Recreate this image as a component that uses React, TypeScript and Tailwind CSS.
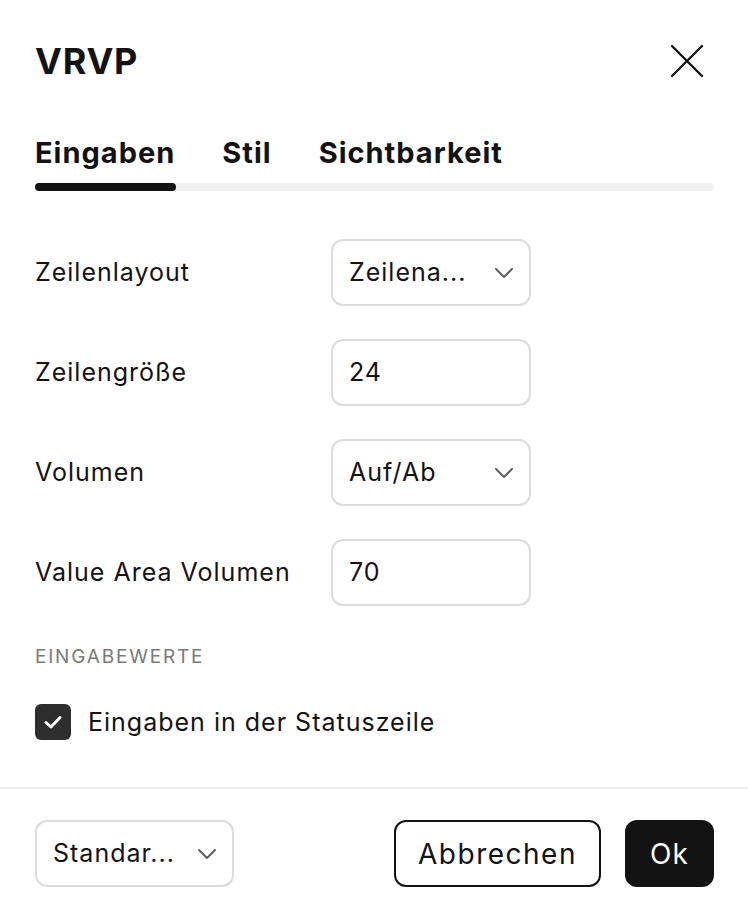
import React from "react";

function Chevron() {
  return (
    <svg width="20" height="12" viewBox="0 0 20 12" fill="none" className="shrink-0">
      <path d="M2 2 L10 10 L18 2" stroke="#5e5e5e" strokeWidth="2" strokeLinecap="round" strokeLinejoin="round" />
    </svg>
  );
}

function SelectBox({ value, w = "w-[200px]" }: { value: string; w?: string }) {
  return (
    <div className={`${w} h-[67px] rounded-[12px] border-2 border-[#dcdcdc] flex items-center justify-between pl-[16px] pr-[15px] bg-white`}>
      <span className="text-[25px] tracking-[1px] text-[#131313]">{value}</span>
      <Chevron />
    </div>
  );
}

function InputBox({ value }: { value: string }) {
  return (
    <div className="w-[200px] h-[67px] rounded-[12px] border-2 border-[#dcdcdc] flex items-center pl-[16px] bg-white">
      <span className="text-[25px] tracking-[1px] text-[#131313]">{value}</span>
    </div>
  );
}

function Row({ label, children }: { label: string; children: React.ReactNode }) {
  return (
    <div className="flex items-center h-[67px]">
      <div className="w-[296px] text-[25px] tracking-[1px] text-[#131313]">{label}</div>
      {children}
    </div>
  );
}

export default function App() {
  return (
    <div className="w-[748px] h-[918px] bg-white flex flex-col" style={{ fontFamily: "Inter, 'Noto Sans', sans-serif" }}>
      <div className="px-[35px] pr-[34px]">
        <div className="flex items-center justify-between h-[62px] mt-[30px]">
          <h1 className="text-[36px] font-bold text-[#131313] tracking-[0.8px]">VRVP</h1>
          <svg width="34" height="34" viewBox="0 0 34 34" className="mr-[10px]">
            <path d="M2 2 L32 32 M32 2 L2 32" stroke="#131313" strokeWidth="2.4" strokeLinecap="round" />
          </svg>
        </div>
        <div className="mt-[43px] flex gap-[47px] text-[29px] font-bold tracking-[1px] text-[#131313] leading-[36px]">
          <span>Eingaben</span>
          <span>Stil</span>
          <span>Sichtbarkeit</span>
        </div>
        <div className="mt-[12px] h-[8px] rounded-full bg-[#f0f0f0] relative">
          <div className="absolute left-0 top-0 h-[8px] w-[141px] rounded-full bg-[#131313]" />
        </div>
        <div className="mt-[48px] flex flex-col gap-[33px]">
          <Row label="Zeilenlayout"><SelectBox value="Zeilena..." /></Row>
          <Row label="Zeilengröße"><InputBox value="24" /></Row>
          <Row label="Volumen"><SelectBox value="Auf/Ab" /></Row>
          <Row label="Value Area Volumen"><InputBox value="70" /></Row>
        </div>
        <div className="mt-[37px] text-[19px] text-[#7a7a7a] tracking-[1.8px]">EINGABEWERTE</div>
        <div className="mt-[32px] flex items-center gap-[17px]">
          <div className="w-[36px] h-[36px] rounded-[6px] bg-[#2e2e2e] flex items-center justify-center">
            <svg width="20" height="16" viewBox="0 0 20 16" fill="none">
              <path d="M3 8.5 L8 13 L17 3.5" stroke="white" strokeWidth="3" strokeLinecap="round" strokeLinejoin="round" />
            </svg>
          </div>
          <span className="text-[25px] tracking-[1px] text-[#131313]">Eingaben in der Statuszeile</span>
        </div>
      </div>
      <div className="mt-[46px] h-[2px] bg-[#ededed]" />
      <div className="px-[35px] pr-[34px] mt-[31px] flex items-center">
        <SelectBox value="Standar..." w="w-[199px]" />
        <div className="flex-1" />
        <button className="h-[67px] w-[207px] rounded-[12px] border-2 border-[#131313] text-[28px] tracking-[1.5px] text-[#131313] bg-white">Abbrechen</button>
        <button className="ml-[24px] h-[67px] w-[89px] rounded-[12px] bg-[#131313] text-[28px] tracking-[1px] text-white">Ok</button>
      </div>
    </div>
  );
}
